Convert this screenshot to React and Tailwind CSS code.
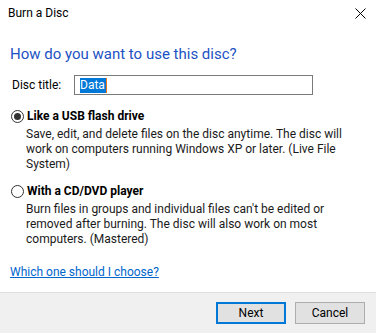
const font = { fontFamily: 'Roboto, "Segoe UI", sans-serif' };

function Radio({ checked }) {
  return (
    <span className="w-[13px] h-[13px] rounded-full border border-[#333] bg-white flex items-center justify-center shrink-0">
      {checked && <span className="w-[7px] h-[7px] rounded-full bg-[#333]" />}
    </span>
  );
}

function Option({ checked, label, lines, className }) {
  return (
    <div className={className}>
      <div className="flex items-center gap-[3px] pl-[11px]">
        <Radio checked={checked} />
        <span className="font-bold text-black">{label}</span>
      </div>
      <p className="pl-[26px] mt-[3px] text-[#1a1a1a]">
        {lines.map((l, i) => (
          <span key={i} className="block">{l}</span>
        ))}
      </p>
    </div>
  );
}

export default function App() {
  return (
    <div
      className="w-[376px] h-[333px] bg-white flex flex-col text-[12px] leading-[15px] text-black antialiased"
      style={font}
    >
      <div className="flex justify-between items-start pl-2 pr-[10px] pt-[6px]">
        <span>Burn a Disc</span>
        <svg width="11" height="11" viewBox="0 0 11 11" className="mt-[2px]">
          <path d="M0.5 0.5 L10.5 10.5 M10.5 0.5 L0.5 10.5" stroke="#000" strokeWidth="1" />
        </svg>
      </div>

      <h1 className="pl-[10px] mt-[23px] text-[15px] leading-[20px] text-[#1c52c4]">
        How do you want to use this disc?
      </h1>

      <div className="flex items-center pl-3 mt-[11px]">
        <span className="w-[62px]">Disc title:</span>
        <div className="w-[239px] h-[20px] border border-[#7a7a7a] flex items-center pl-[5px]">
          <span className="bg-[#0078d7] text-white h-[15px] leading-[15px] pr-[1px]">Data</span>
          <span className="w-[1px] h-[15px] bg-[#e8751a]" />
        </div>
      </div>

      <Option
        checked
        className="mt-[14px]"
        label="Like a USB flash drive"
        lines={[
          'Save, edit, and delete files on the disc anytime. The disc will',
          'work on computers running Windows XP or later. (Live File',
          'System)',
        ]}
      />

      <Option
        className="mt-[12px]"
        label="With a CD/DVD player"
        lines={[
          "Burn files in groups and individual files can't be edited or",
          'removed after burning. The disc will also work on most',
          'computers. (Mastered)',
        ]}
      />

      <a href="#" className="ml-[10px] mt-[18px] text-[#0066cc] underline self-start">
        Which one should I choose?
      </a>

      <div className="mt-auto h-[41px] bg-[#f0f0f0] border-t border-[#dfdfdf] flex justify-end items-start gap-[9px] pt-[9px] pr-[11px]">
        <button className="w-[70px] h-[22px] bg-[#e1e1e1] border-2 border-[#0078d7] text-black">
          Next
        </button>
        <button className="w-[70px] h-[22px] bg-[#e1e1e1] border border-[#adadad] text-black">
          Cancel
        </button>
      </div>
    </div>
  );
}
